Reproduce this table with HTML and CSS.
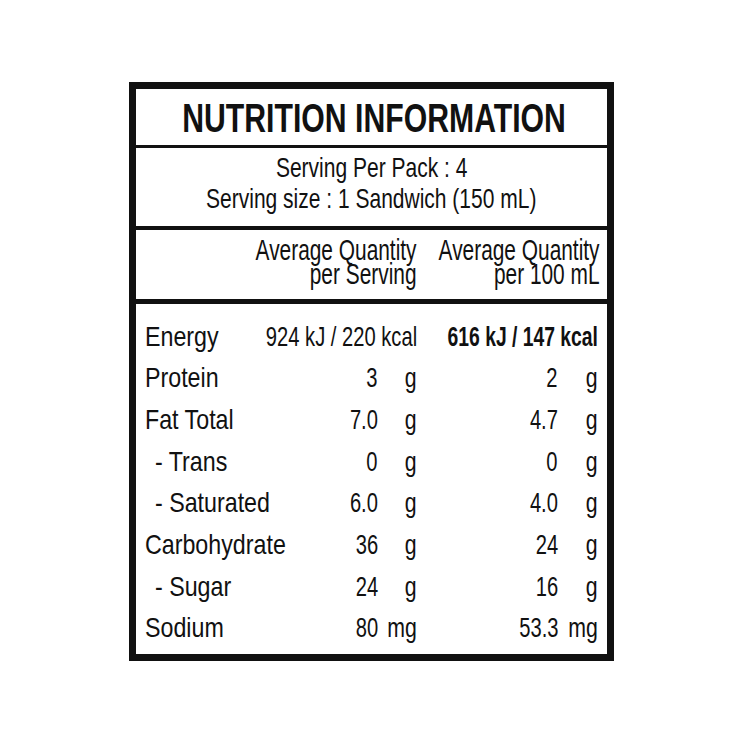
FILE: index.html
```html
<!DOCTYPE html>
<html lang="en">
<head>
<meta charset="utf-8">
<title>Nutrition Information</title>
<link rel="stylesheet" href="styles.css">
</head>
<body>
<div class="label">
  <div class="title"><div class="title-text">NUTRITION INFORMATION</div></div>
  <div class="serving">
    <div class="serving-line">Serving Per Pack : 4</div>
    <div class="serving-line">Serving size : 1 Sandwich (150 mL)</div>
  </div>
  <div class="head cols">
    <div class="head-cell c1">Average Quantity<br>per Serving</div>
    <div class="head-cell c2">Average Quantity<br>per 100 mL</div>
  </div>
  <div class="data cols">
    <div class="lab">Energy</div>
    <div class="en c1">924 kJ / 220 kcal</div>
    <div class="en bold c2">616 kJ / 147 kcal</div>

    <div class="lab">Protein</div>
    <div class="num">3</div><div class="unit">g</div>
    <div class="num">2</div><div class="unit">g</div>

    <div class="lab">Fat Total</div>
    <div class="num">7.0</div><div class="unit">g</div>
    <div class="num">4.7</div><div class="unit">g</div>

    <div class="lab sub">- Trans</div>
    <div class="num">0</div><div class="unit">g</div>
    <div class="num">0</div><div class="unit">g</div>

    <div class="lab sub">- Saturated</div>
    <div class="num">6.0</div><div class="unit">g</div>
    <div class="num">4.0</div><div class="unit">g</div>

    <div class="lab">Carbohydrate</div>
    <div class="num">36</div><div class="unit">g</div>
    <div class="num">24</div><div class="unit">g</div>

    <div class="lab sub">- Sugar</div>
    <div class="num">24</div><div class="unit">g</div>
    <div class="num">16</div><div class="unit">g</div>

    <div class="lab">Sodium</div>
    <div class="num">80</div><div class="unit">mg</div>
    <div class="num">53.3</div><div class="unit">mg</div>
  </div>
</div>
</body>
</html>
```
FILE: styles.css
```css
* { box-sizing: border-box; }

body {
  margin: 0;
  background: #ffffff;
  font-family: "Liberation Sans", Arial, sans-serif;
  color: #111111;
}

.label {
  margin: 82px 0 0 129px;
  width: 485px;
  height: 579px;
  border: 7px solid #111111;
  display: flex;
  flex-direction: column;
}

.title {
  height: 59px;
  border-bottom: 3px solid #111111;
  padding-top: 3px;
  display: flex;
  justify-content: center;
  font-weight: 700;
  font-size: 40px;
  line-height: 53px;
  white-space: nowrap;
}

.title-text {
  flex: none;
  margin-left: 6px;
  transform: scaleX(0.755);
  transform-origin: 50% 50%;
}

.serving {
  height: 82px;
  border-bottom: 4px solid #111111;
  padding-top: 4px;
  display: flex;
  flex-direction: column;
  align-items: center;
  font-size: 28px;
  line-height: 31px;
  white-space: nowrap;
}

.serving-line {
  flex: none;
  transform: scaleX(0.75);
  transform-origin: 50% 50%;
}

.cols {
  display: grid;
  grid-template-columns: 120px 113px 39px 141px 40px;
  padding-left: 9px;
  padding-right: 9px;
  font-size: 28px;
  white-space: nowrap;
}

.head {
  height: 74px;
  border-bottom: 5px solid #111111;
  padding-top: 8px;
  font-size: 29px;
  line-height: 24px;
  align-content: start;
}

.head-cell {
  justify-self: unsafe end;
  text-align: right;
  transform: scaleX(0.72);
  transform-origin: 100% 50%;
}

.head-cell.c2 {
  margin-right: -2px;
}

.c1 { grid-column: 2 / 4; }
.c2 { grid-column: 4 / 6; }

.data {
  flex: 1;
  padding-top: 11.5px;
  grid-auto-rows: 41.7px;
  line-height: 41.7px;
  align-content: start;
}

.lab {
  justify-self: unsafe start;
  transform: scaleX(0.83);
  transform-origin: 0 50%;
}

.lab.sub {
  padding-left: 12px;
}

.num,
.en {
  justify-self: unsafe end;
  transform: scaleX(0.72);
  transform-origin: 100% 50%;
}

.en.bold {
  font-weight: 700;
  transform: scaleX(0.69);
}

.unit {
  justify-self: unsafe end;
  transform: scaleX(0.76);
  transform-origin: 100% 50%;
}
```
